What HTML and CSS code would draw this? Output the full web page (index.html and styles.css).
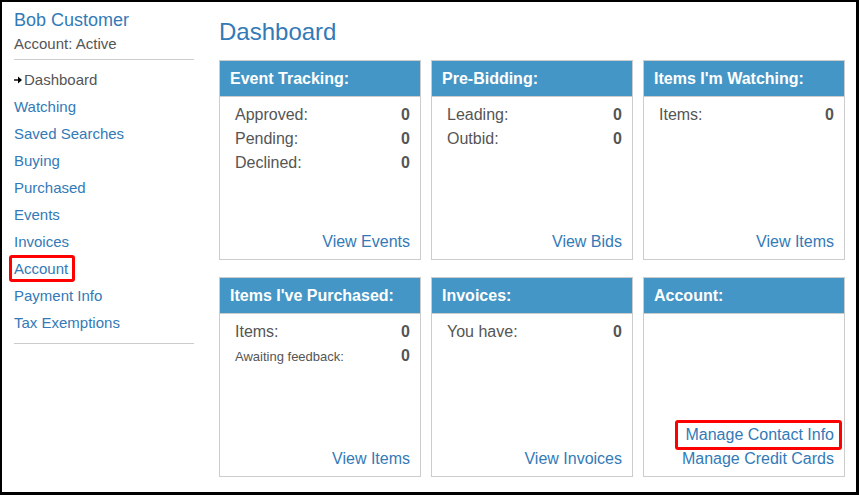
FILE: index.html
```html
<!DOCTYPE html>
<html>
<head>
<meta charset="utf-8">
<link rel="stylesheet" href="styles.css">
</head>
<body>
<div class="frame">
  <aside class="sidebar">
    <div class="user-name">Bob Customer</div>
    <div class="user-status">Account: Active</div>
    <hr class="divider">
    <ul class="nav">
      <li class="nav-item current"><svg class="arrow" width="8" height="8" viewBox="0 0 8 8"><path d="M0 3.3h4.5v1.4H0z" fill="#000"/><path d="M4 0.6L8 4 4 7.4z" fill="#000"/></svg><span>Dashboard</span></li>
      <li class="nav-item"><a href="#">Watching</a></li>
      <li class="nav-item"><a href="#">Saved Searches</a></li>
      <li class="nav-item"><a href="#">Buying</a></li>
      <li class="nav-item"><a href="#">Purchased</a></li>
      <li class="nav-item"><a href="#">Events</a></li>
      <li class="nav-item"><a href="#">Invoices</a></li>
      <li class="nav-item"><a href="#" class="marked side-mark">Account</a></li>
      <li class="nav-item"><a href="#">Payment Info</a></li>
      <li class="nav-item"><a href="#">Tax Exemptions</a></li>
    </ul>
    <hr class="divider bottom">
  </aside>
  <main class="main">
    <h1 class="title">Dashboard</h1>
    <div class="grid">
      <section class="card">
        <div class="card-head">Event Tracking:</div>
        <div class="card-body">
          <div class="row"><span>Approved:</span><b>0</b></div>
          <div class="row"><span>Pending:</span><b>0</b></div>
          <div class="row"><span>Declined:</span><b>0</b></div>
          <div class="card-foot"><a href="#">View Events</a></div>
        </div>
      </section>
      <section class="card">
        <div class="card-head">Pre-Bidding:</div>
        <div class="card-body">
          <div class="row"><span>Leading:</span><b>0</b></div>
          <div class="row"><span>Outbid:</span><b>0</b></div>
          <div class="card-foot"><a href="#">View Bids</a></div>
        </div>
      </section>
      <section class="card">
        <div class="card-head">Items I'm Watching:</div>
        <div class="card-body">
          <div class="row"><span>Items:</span><b>0</b></div>
          <div class="card-foot"><a href="#">View Items</a></div>
        </div>
      </section>
      <section class="card">
        <div class="card-head">Items I've Purchased:</div>
        <div class="card-body">
          <div class="row"><span>Items:</span><b>0</b></div>
          <div class="row"><span class="small">Awaiting feedback:</span><b>0</b></div>
          <div class="card-foot"><a href="#">View Items</a></div>
        </div>
      </section>
      <section class="card">
        <div class="card-head">Invoices:</div>
        <div class="card-body">
          <div class="row"><span>You have:</span><b>0</b></div>
          <div class="card-foot"><a href="#">View Invoices</a></div>
        </div>
      </section>
      <section class="card">
        <div class="card-head">Account:</div>
        <div class="card-body">
          <div class="card-foot">
            <a href="#" class="marked card-mark">Manage Contact Info</a><br>
            <a href="#">Manage Credit Cards</a>
          </div>
        </div>
      </section>
    </div>
  </main>
</div>
</body>
</html>
```

FILE: styles.css
```css
* { box-sizing: border-box; }
html, body { margin: 0; padding: 0; background: #fff; }
body {
  font-family: "Liberation Sans", Arial, sans-serif;
  color: #555;
}
a { color: #337ab7; text-decoration: none; }

.frame {
  width: 859px;
  height: 495px;
  border-style: solid;
  border-color: #000;
  border-width: 2px 3px 3px 2px;
  display: flex;
  overflow: hidden;
}

.sidebar {
  width: 192px;
  padding: 8px 0 0 12px;
  flex: none;
}
.user-name {
  font-size: 18px;
  line-height: 20px;
  color: #337ab7;
}
.user-status {
  font-size: 15px;
  line-height: 20px;
  margin-top: 4px;
}
.divider {
  border: 0;
  border-top: 1px solid #ccc;
  margin: 5px 0 0 0;
  width: 180px;
  height: 0;
}
.divider.bottom { margin-top: 7px; }
.nav {
  list-style: none;
  margin: 6px 0 0 0;
  padding: 0;
}
.nav-item {
  font-size: 15px;
  line-height: 27px;
  height: 27px;
  display: flex;
  align-items: center;
}
.nav-item a, .nav-item span { display: inline-block; line-height: 27px; }
.current span { color: #555; }
.arrow { margin-right: 2px; flex: none; }

.marked { position: relative; }
.marked::after {
  content: "";
  position: absolute;
  border: 3px solid #f00;
  border-radius: 3px;
}
.side-mark::after { left: -5px; right: -7px; top: 0; bottom: 0; }
.card-mark { display: inline-block; line-height: 24px; }
.card-mark::after { left: -10px; right: -8px; top: -3px; bottom: -3px; }

.main {
  margin-left: 25px;
  padding-top: 16px;
  width: 626px;
  flex: none;
}
.title {
  margin: 0 0 14px 0;
  font-size: 24px;
  line-height: 28px;
  font-weight: normal;
  color: #337ab7;
}
.grid {
  display: grid;
  grid-template-columns: repeat(3, 202px);
  grid-template-rows: repeat(2, 200px);
  column-gap: 10px;
  row-gap: 17px;
}
.card {
  border: 1px solid #ccc;
  display: flex;
  flex-direction: column;
}
.card-head {
  background: #4396c5;
  color: #fff;
  font-weight: bold;
  font-size: 16px;
  line-height: 35px;
  height: 36px;
  padding-left: 10px;
  border-bottom: 1px solid #ccc;
}
.card-body {
  flex: 1;
  display: flex;
  flex-direction: column;
  padding: 6px 10px 5px 15px;
  font-size: 16px;
  line-height: 24px;
}
.row {
  display: flex;
  justify-content: space-between;
  align-items: baseline;
}
.row b { color: #555; }
.small { font-size: 13px; }
.card-foot {
  margin-top: auto;
  text-align: right;
}
```
